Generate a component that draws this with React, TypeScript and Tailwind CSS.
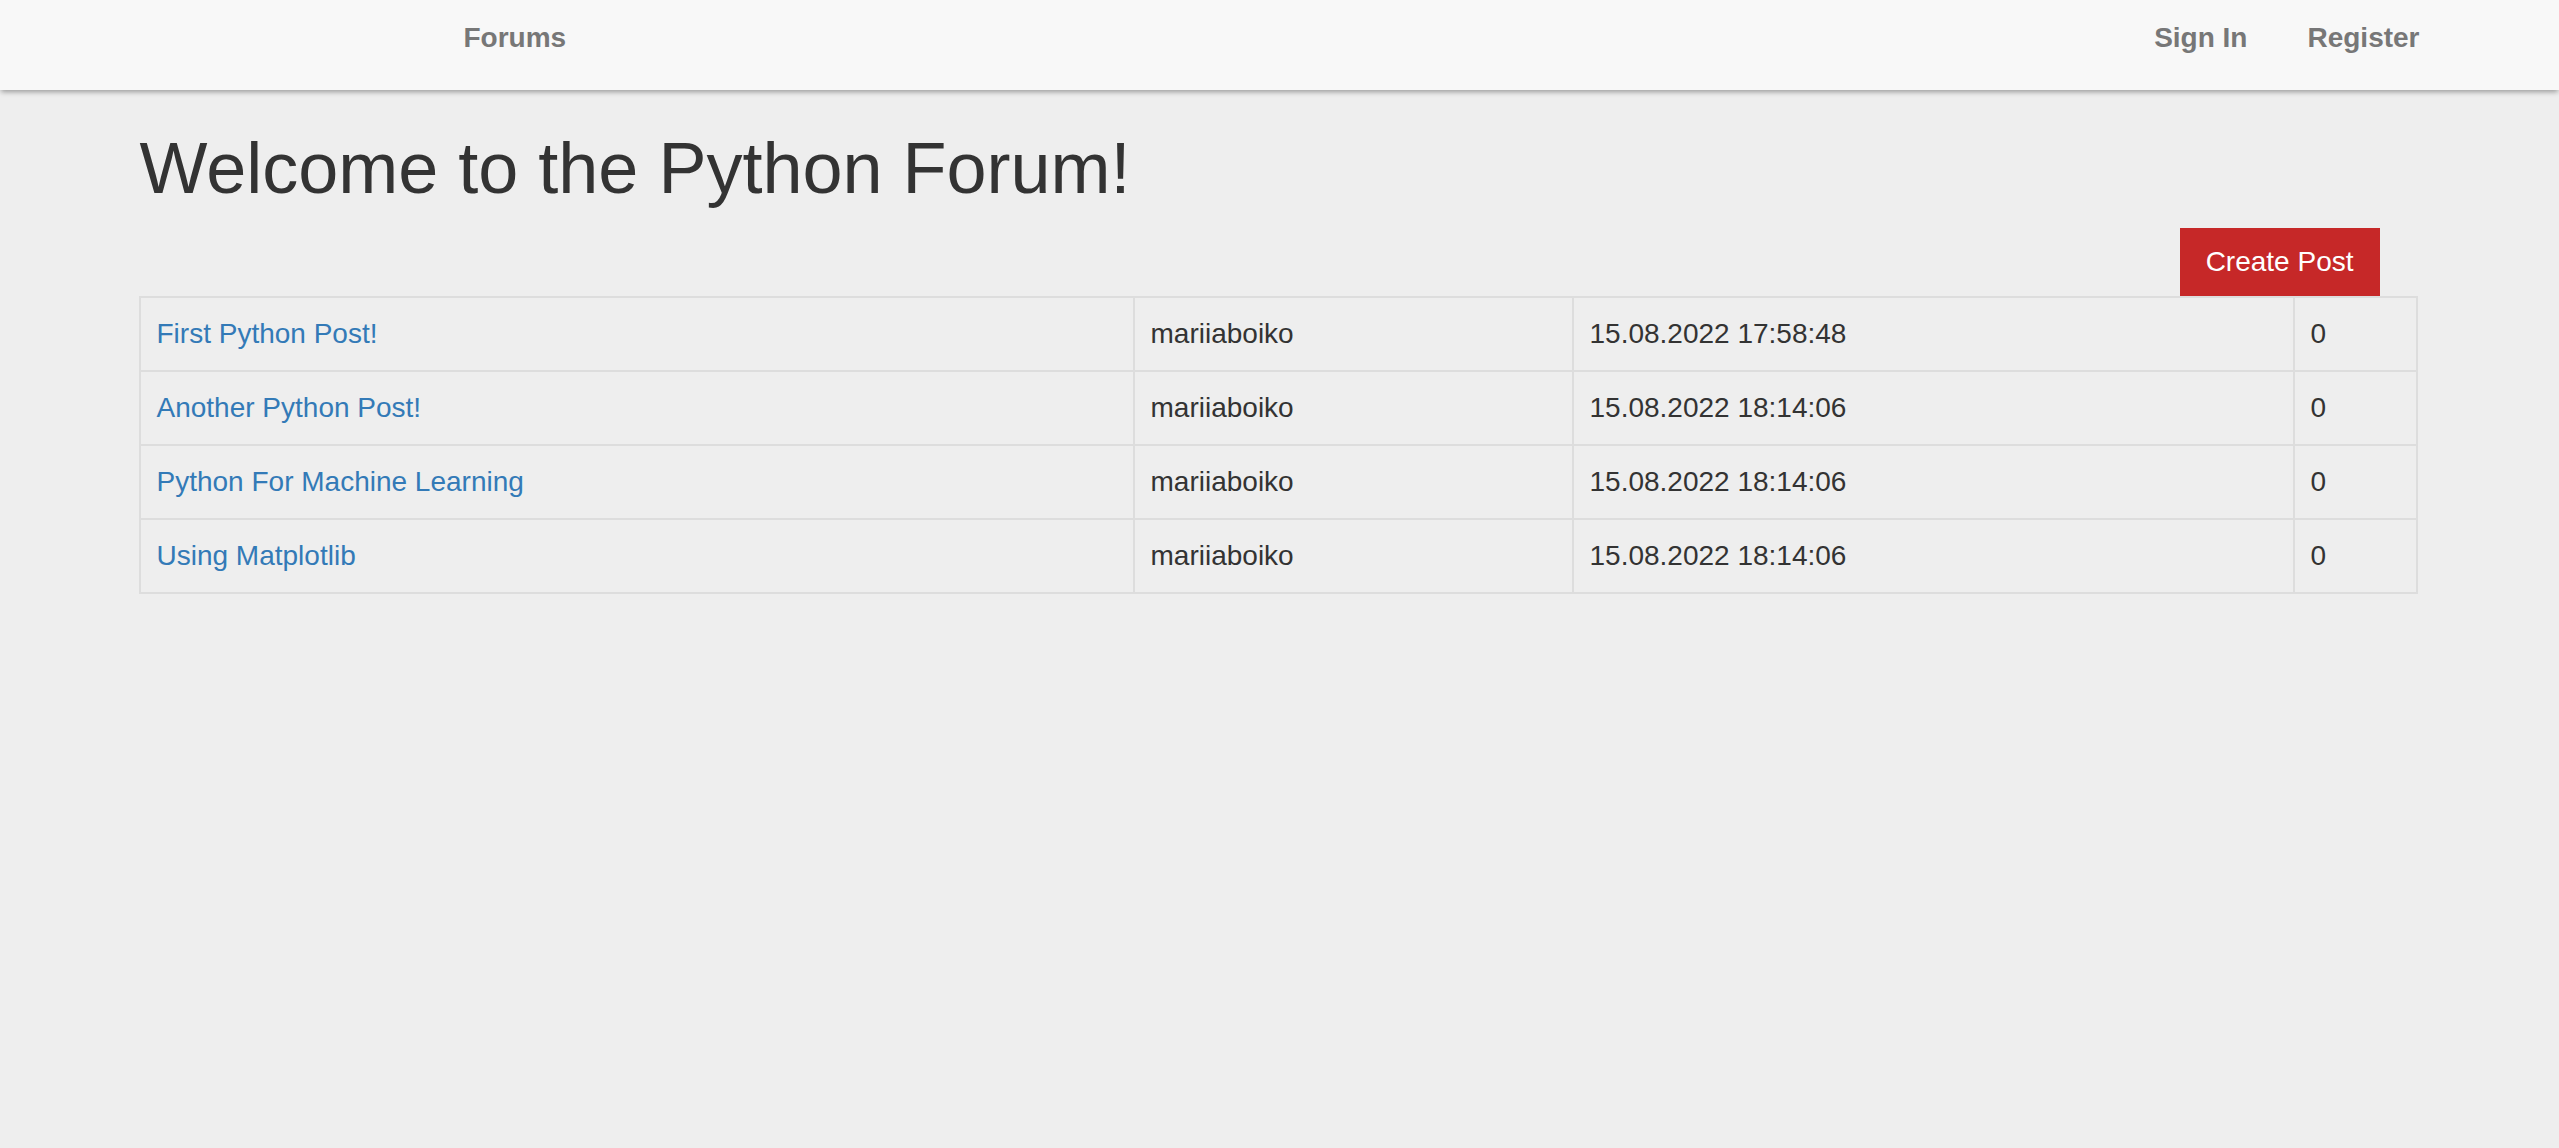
const posts = [
  { title: "First Python Post!", author: "mariiaboiko", date: "15.08.2022 17:58:48", replies: 0 },
  { title: "Another Python Post!", author: "mariiaboiko", date: "15.08.2022 18:14:06", replies: 0 },
  { title: "Python For Machine Learning", author: "mariiaboiko", date: "15.08.2022 18:14:06", replies: 0 },
  { title: "Using Matplotlib", author: "mariiaboiko", date: "15.08.2022 18:14:06", replies: 0 },
];

export default function App() {
  return (
    <div className="min-h-screen bg-[#eeeeee] text-[#333333] font-['Liberation_Sans',Arial,Helvetica,sans-serif] text-[28px] leading-[40px]">
      {/* Navbar */}
      <nav className="h-[90px] bg-[#f8f8f8] shadow-[0_3px_5px_-1px_rgba(0,0,0,0.35)]">
        <div className="w-[2280px] mx-auto flex justify-between pt-[18px]">
          <ul className="flex ml-[294px]">
            <li>
              <a href="#" className="px-[30px] block font-bold text-[#777777] hover:text-[#333333]">
                Forums
              </a>
            </li>
          </ul>
          <ul className="flex -mr-[30px]">
            <li>
              <a href="#" className="px-[30px] block font-bold text-[#777777] hover:text-[#333333]">
                Sign In
              </a>
            </li>
            <li>
              <a href="#" className="px-[30px] block font-bold text-[#777777] hover:text-[#333333]">
                Register
              </a>
            </li>
          </ul>
        </div>
      </nav>

      {/* Content */}
      <div className="w-[2280px] mx-auto">
        <h1 className="mt-[39px] mb-[20px] text-[72px] leading-[79px] font-normal">
          Welcome to the Python Forum!
        </h1>

        <div className="flex justify-end">
          <button className="mr-[40px] bg-[#c62828] text-white px-[26px] py-[14px] text-[28px] leading-[40px]">
            Create Post
          </button>
        </div>

        <table className="w-[2277px] -ml-px table-fixed border-collapse border-2 border-[#dddddd]">
          <colgroup>
            <col className="w-[994px]" />
            <col className="w-[439px]" />
            <col className="w-[721px]" />
            <col className="w-[123px]" />
          </colgroup>
          <tbody>
            {posts.map((p) => (
              <tr key={p.title}>
                <td className="border-2 border-[#dddddd] p-[16px] align-top">
                  <a href="#" className="text-[#337ab7] hover:underline">
                    {p.title}
                  </a>
                </td>
                <td className="border-2 border-[#dddddd] p-[16px] align-top">{p.author}</td>
                <td className="border-2 border-[#dddddd] p-[16px] align-top">{p.date}</td>
                <td className="border-2 border-[#dddddd] p-[16px] align-top">{p.replies}</td>
              </tr>
            ))}
          </tbody>
        </table>
      </div>
    </div>
  );
}
